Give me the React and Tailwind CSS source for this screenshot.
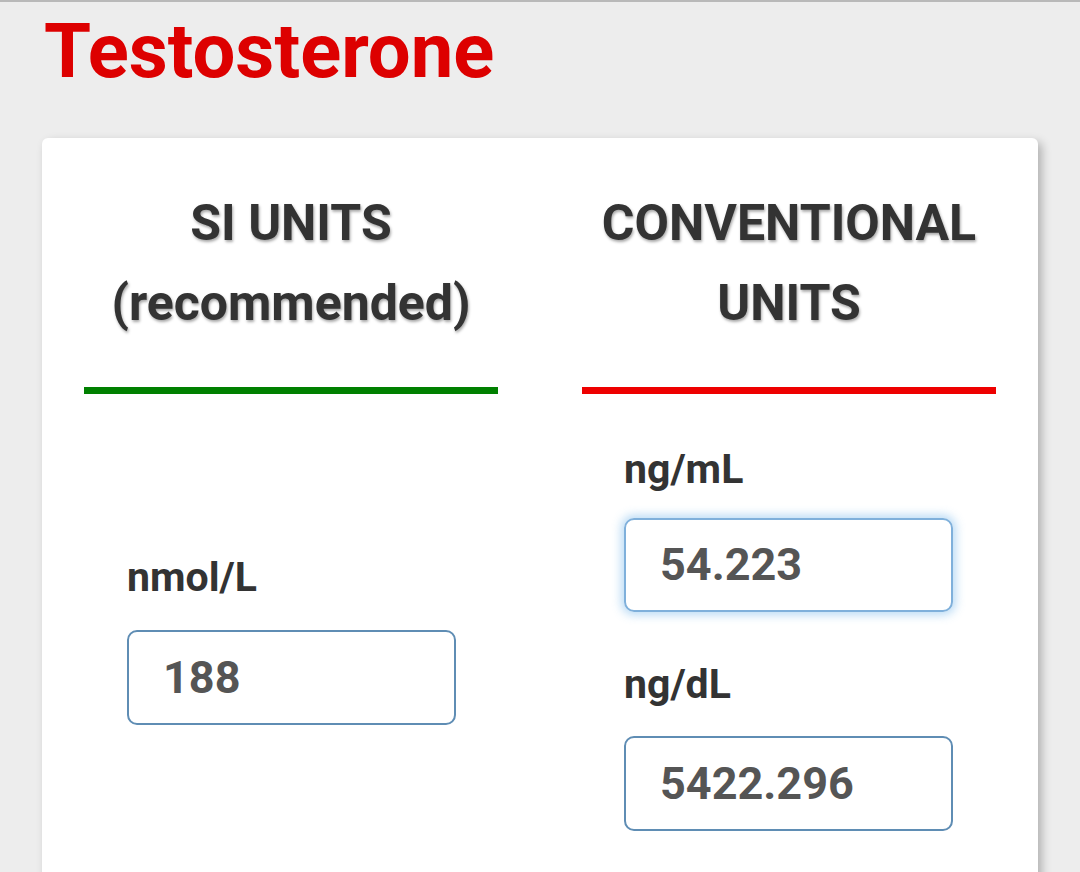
export default function App() {
  const font = { fontFamily: "Roboto, 'Liberation Sans', sans-serif" };
  const headShadow = "[text-shadow:1px_2px_3px_rgba(0,0,0,0.35)]";
  return (
    <div
      className="min-h-[872px] w-[1080px] overflow-hidden border-t-2 border-[#b9b9b9] bg-[#ededed]"
      style={font}
    >
      <h1 className="pl-[44px] pt-[4px] text-[76px] font-bold leading-[91px] text-[#dd0000]">
        Testosterone
      </h1>

      <div className="mx-[42px] mt-[41px] h-[800px] rounded-[6px] bg-white px-[42px] pt-[45px] shadow-[4px_4px_10px_rgba(0,0,0,0.25)]">
        <div className="grid grid-cols-2 gap-x-[84px]">
          {/* column headers */}
          <div className="flex flex-col items-center">
            <div
              className={`text-center text-[50px] font-bold leading-[80px] text-[#333] ${headShadow}`}
            >
              SI UNITS
              <br />
              (recommended)
            </div>
            <div className="mt-[44px] h-[7px] w-full bg-[#008000]" />
          </div>
          <div className="flex flex-col items-center">
            <div
              className={`text-center text-[50px] font-bold leading-[80px] text-[#333] ${headShadow}`}
            >
              CONVENTIONAL
              <br />
              UNITS
            </div>
            <div className="mt-[44px] h-[7px] w-full bg-[#ee0000]" />
          </div>

          {/* SI value */}
          <div className="flex flex-col pl-[43px] pt-[158px]">
            <label className="text-[41px] font-bold leading-[50px] text-[#333]">nmol/L</label>
            <div className="mt-[28px] flex h-[95px] w-[329px] items-center rounded-[10px] border-2 border-[#5f8db4] pl-[34px]">
              <span className="text-[45px] font-bold text-[#555]">188</span>
            </div>
          </div>

          {/* conventional values */}
          <div className="flex flex-col pl-[42px] pt-[50px]">
            <label className="text-[41px] font-bold leading-[50px] text-[#333]">ng/mL</label>
            <div className="mt-[24px] flex h-[94px] w-[329px] items-center rounded-[10px] border-2 border-[#7fb0db] pl-[34px] shadow-[0_0_10px_3px_rgba(102,175,233,0.45)]">
              <span className="text-[45px] font-bold text-[#555]">54.223</span>
            </div>
            <label className="mt-[47px] text-[41px] font-bold leading-[50px] text-[#333]">ng/dL</label>
            <div className="mt-[27px] flex h-[95px] w-[329px] items-center rounded-[10px] border-2 border-[#5f8db4] pl-[34px]">
              <span className="text-[45px] font-bold text-[#555]">5422.296</span>
            </div>
          </div>
        </div>
      </div>
    </div>
  );
}
